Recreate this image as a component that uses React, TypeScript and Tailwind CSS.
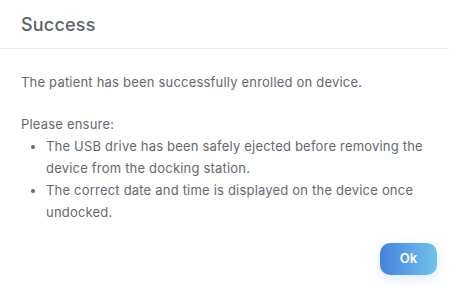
export default function App() {
  return (
    <div className="flex h-[285px] w-[449px] flex-col overflow-hidden rounded-[3px] bg-white font-['Inter',sans-serif] text-[13px] text-[#65686f]">
      <div className="flex h-[49px] items-center border-b border-[#ececee] px-[21px]">
        <h2 className="text-[18px] font-medium tracking-[0.2px] text-[#5b6270]">Success</h2>
      </div>
      <div className="px-[21px] pt-[22px] leading-[22px] tracking-[0.2px]">
        <p>The patient has been successfully enrolled on device.</p>
        <p className="mt-[20px]">Please ensure:</p>
        <ul className="list-disc pl-[25px]">
          <li>The USB drive has been safely ejected before removing the device from the docking station.</li>
          <li>The correct date and time is displayed on the device once undocked.</li>
        </ul>
      </div>
      <div className="flex justify-end px-[12px] pt-[20px]">
        <button className="h-[32px] w-[57px] rounded-[10px] bg-gradient-to-r from-[#4683dc] to-[#71c2eb] text-[13px] font-semibold text-white shadow-[0_4px_12px_rgba(70,131,220,0.18)]">
          Ok
        </button>
      </div>
    </div>
  )
}
